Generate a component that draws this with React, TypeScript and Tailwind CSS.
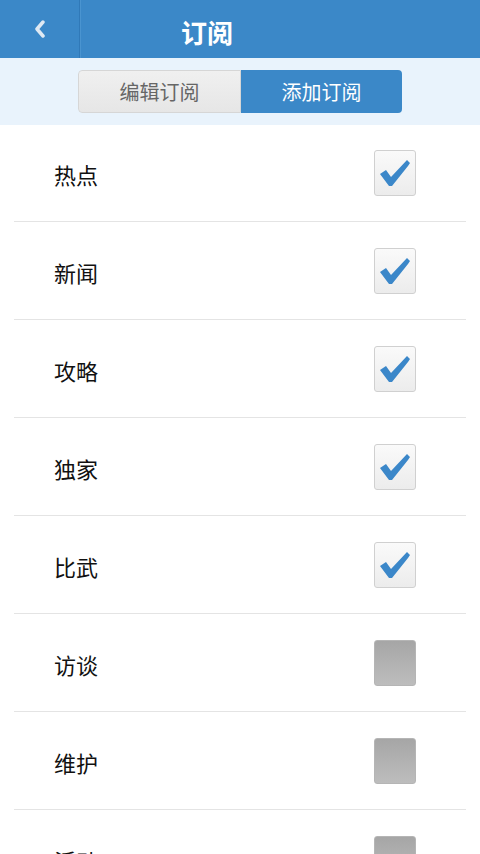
const rows = [
  { label: "热点", checked: true },
  { label: "新闻", checked: true },
  { label: "攻略", checked: true },
  { label: "独家", checked: true },
  { label: "比武", checked: true },
  { label: "访谈", checked: false },
  { label: "维护", checked: false },
  { label: "活动", checked: false },
];

const CheckBox = ({ checked }: { checked: boolean }) => {
  if (!checked) {
    return (
      <div className="w-[42px] h-[46px] rounded-[3px] bg-gradient-to-b from-[#a6a6a6] to-[#bdbdbd] border border-[#b5b5b5]" />
    );
  }
  return (
    <div className="w-[42px] h-[46px] rounded-[3px] border border-[#d0d0d0] bg-gradient-to-b from-[#fafafa] to-[#ececec] flex items-center justify-center">
      <svg width="34" height="30" viewBox="0 0 34 30">
        <path
          d="M2 16 L8 12 L13 19 L29 2 L32 5 L30 8 L14 28 L11 28 Z"
          fill="#3b87c9"
        />
      </svg>
    </div>
  );
};

export default function App() {
  return (
    <div className="w-[480px] h-[854px] overflow-hidden bg-white font-['Noto_Sans_CJK_SC',sans-serif]">
      <div className="h-[58px] bg-[#3b88c8] flex items-center">
        <div className="w-[80px] h-full flex items-center justify-center border-r border-[#3079b8]">
          <svg width="14" height="18" viewBox="0 0 14 18">
            <path d="M10 2 L4 9 L10 16" stroke="#dfe9f3" strokeWidth="3.5" fill="none" strokeLinecap="round" strokeLinejoin="round" />
          </svg>
        </div>
        <div className="w-[1px] h-full bg-[#4a94d0]" />
        <div className="flex-1 pl-[100px] text-white text-[26px] font-bold leading-none pt-[6px]">订阅</div>
      </div>

      <div className="h-[67px] bg-[#e9f3fc] flex items-center justify-center">
        <div className="flex w-[324px] h-[43px] rounded-[4px] overflow-hidden text-[20px]">
          <div className="flex-1 flex items-center justify-center bg-gradient-to-b from-[#f0f0f0] to-[#e6e6e6] border border-[#d6d6d6] rounded-l-[4px] text-[#666]">
            编辑订阅
          </div>
          <div className="flex-1 flex items-center justify-center bg-[#3b88c8] text-white">
            添加订阅
          </div>
        </div>
      </div>

      <div className="px-[14px]">
        {rows.map((r, i) => (
          <div
            key={r.label}
            className={`flex items-center justify-between h-[98px] pl-[40px] pr-[50px] ${i === 0 ? "h-[97px] -mt-[1px]" : ""} border-b border-[#e4e4e4]`}
          >
            <span className="text-[22px] text-[#111] pt-[3px]">{r.label}</span>
            <CheckBox checked={r.checked} />
          </div>
        ))}
      </div>
    </div>
  );
}
